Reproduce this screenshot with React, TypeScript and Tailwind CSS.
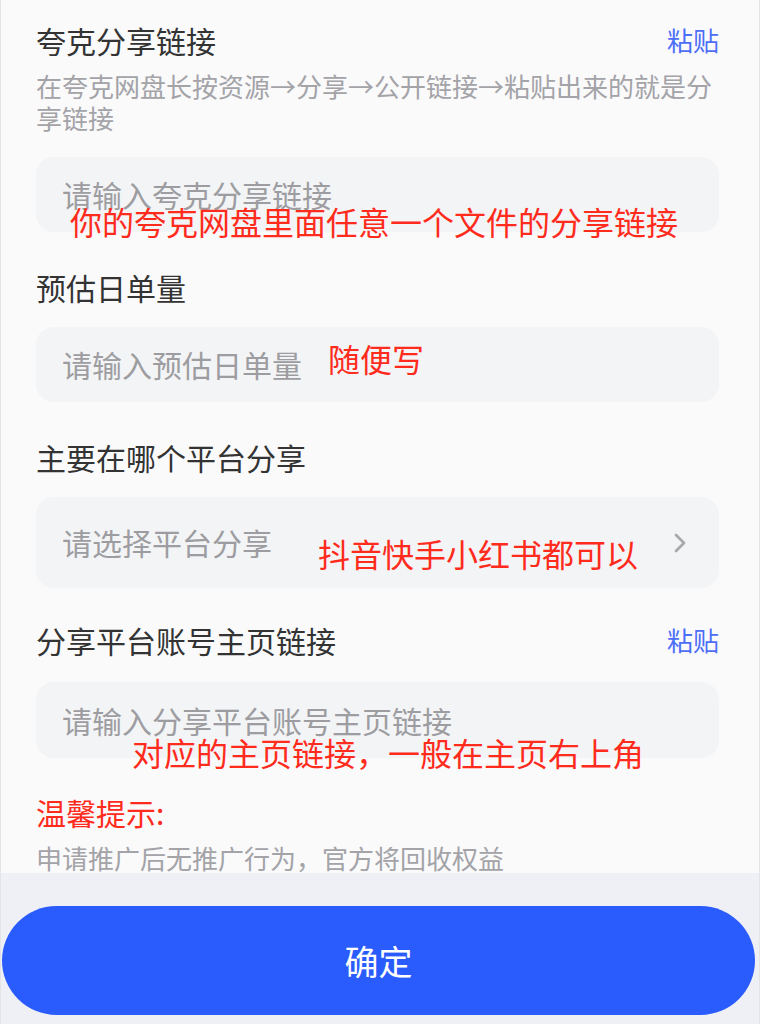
import React from "react";

const font = { fontFamily: '"Noto Sans CJK SC", "Noto Sans", sans-serif' };

const Label = ({ text, paste }: { text: string; paste?: boolean }) => (
	<div className="flex h-[40px] items-center justify-between">
		<span className="text-[30px] leading-[40px] text-[#333333]">{text}</span>
		{paste && <span className="text-[26px] leading-[40px] text-[#4d6ef6]">粘贴</span>}
	</div>
);

const Note = ({ text, className }: { text: string; className: string }) => (
	<span className={`absolute whitespace-nowrap text-[32px] leading-[40px] text-[#ff2b1c] ${className}`}>
		{text}
	</span>
);

export default function App() {
	return (
		<div
			className="flex h-[1024px] w-[760px] flex-col overflow-hidden border-x border-[#e4e4e6] bg-[#fafafb]"
			style={font}
		>
			<div className="relative z-10 h-[873px] shrink-0 pl-[35px] pr-[40px] pt-[20px]">
				<Label text="夸克分享链接" paste />
				<p className="mt-[10px] text-[26px] leading-[32px] text-[#a3a3a8]">
					在夸克网盘长按资源→分享→公开链接→粘贴出来的就是分享链接
				</p>

				<div className="relative mt-[23px] flex h-[75px] items-center rounded-[18px] bg-[#f3f4f6] px-[26px]">
					<span className="text-[30px] text-[#9d9da1]">请输入夸克分享链接</span>
					<Note text="你的夸克网盘里面任意一个文件的分享链接" className="left-[34px] top-[44px]" />
				</div>

				<div className="mt-[35px]">
					<Label text="预估日单量" />
				</div>
				<div className="relative mt-[20px] flex h-[75px] items-center rounded-[18px] bg-[#f3f4f6] px-[26px]">
					<span className="text-[30px] text-[#9d9da1]">请输入预估日单量</span>
					<Note text="随便写" className="left-[292px] top-[11px]" />
				</div>

				<div className="mt-[35px]">
					<Label text="主要在哪个平台分享" />
				</div>
				<div className="relative mt-[20px] flex h-[91px] items-center justify-between rounded-[18px] bg-[#f3f4f6] pl-[26px] pr-[32px]">
					<span className="text-[30px] text-[#9d9da1]">请选择平台分享</span>
					<svg width="14" height="22" viewBox="0 0 14 22" fill="none">
						<path d="M3 3l8 8-8 8" stroke="#a9a9ad" strokeWidth="2.8" strokeLinecap="round" strokeLinejoin="round" />
					</svg>
					<Note text="抖音快手小红书都可以" className="left-[282px] top-[36px]" />
				</div>

				<div className="mt-[32px]">
					<Label text="分享平台账号主页链接" paste />
				</div>
				<div className="relative mt-[22px] flex h-[76px] items-center rounded-[18px] bg-[#f3f4f6] px-[26px]">
					<span className="text-[30px] text-[#9d9da1]">请输入分享平台账号主页链接</span>
					<Note text="对应的主页链接，一般在主页右上角" className="left-[96px] top-[50px]" />
				</div>

				<div className="mt-[34px] text-[30px] leading-[40px] text-[#ff2b1c]">温馨提示:</div>
				<p className="mt-[11px] text-[26px] leading-[30px] text-[#a3a3a8]">
					申请推广后无推广行为，官方将回收权益
				</p>
			</div>

			<div className="flex-1 bg-[#eff0f5] pl-[1px] pr-[4px] pt-[33px]">
				<button className="flex h-[109px] w-full items-center justify-center rounded-full bg-[#2a5bfd] text-[34px] text-white">
					确定
				</button>
			</div>
		</div>
	);
}
